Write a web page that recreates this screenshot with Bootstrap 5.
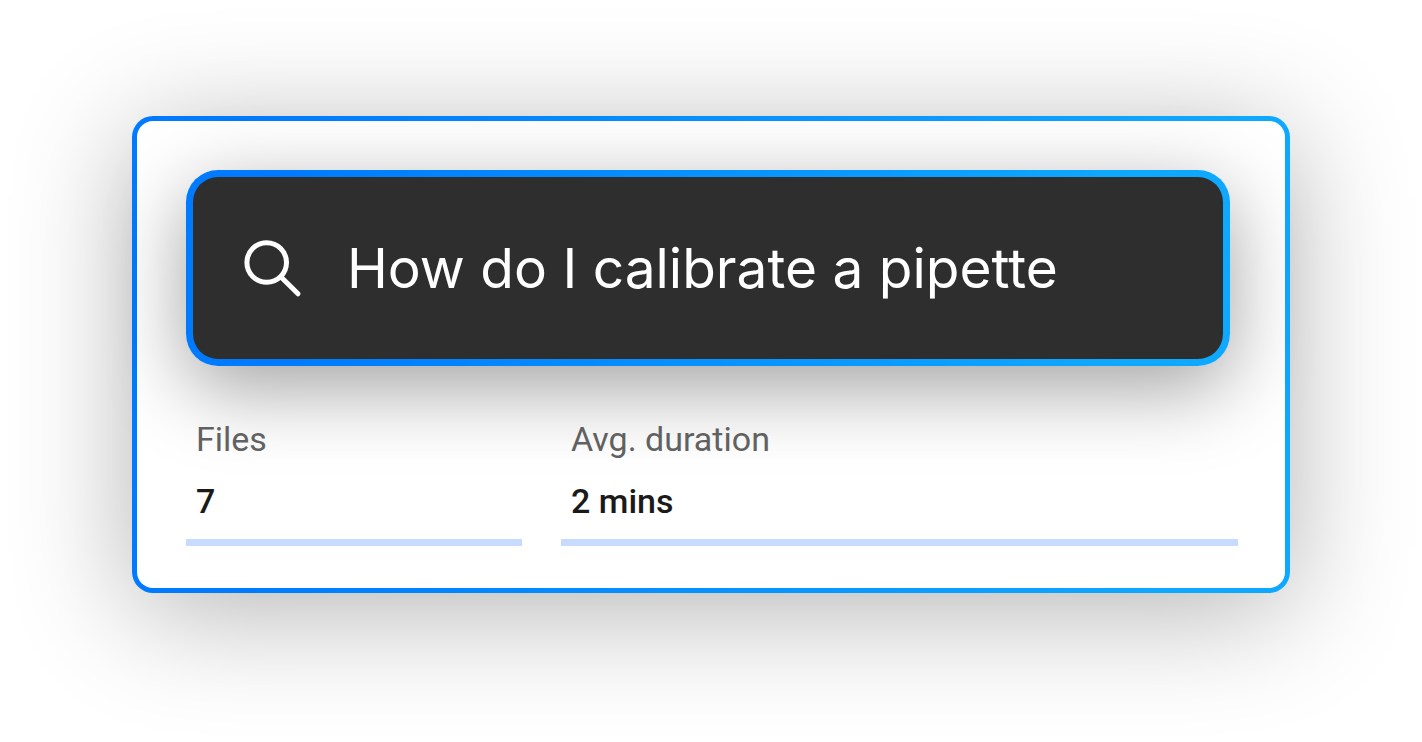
<!DOCTYPE html>
<html lang="en">
<head>
<meta charset="utf-8">
<meta name="viewport" content="width=device-width, initial-scale=1">
<title>Search</title>
<link href="https://cdn.jsdelivr.net/npm/bootstrap@5.3.0/dist/css/bootstrap.min.css" rel="stylesheet">
<style>
  :root { --edge: linear-gradient(90deg, #007bff 10%, #0fa8ff 90%); }
  body { background: #fff; font-family: Roboto, sans-serif; }
  .page-area { padding: 116px 132px; overflow: hidden; min-height: 100vh; }
  .panel {
    border: 5px solid transparent;
    border-radius: 21px;
    padding: 49px 47px 42px 49px;
    background: linear-gradient(#fff, #fff) padding-box, var(--edge) border-box;
    box-shadow: 0 18px 120px rgba(0, 0, 0, .3);
  }
  .search-box {
    border: 7px solid transparent;
    border-radius: 32px;
    height: 196px;
    padding: 0 48px;
    gap: 44px;
    margin-right: 8px;
    background: linear-gradient(#2e2e2e, #2e2e2e) padding-box, var(--edge) border-box;
    box-shadow: 0 22px 80px rgba(0, 0, 0, .37);
  }
  .search-box .form-control,
  .search-box .form-control:focus {
    color: #fff;
    font: 400 55px/72px Inter, sans-serif;
    min-width: 0;
  }
  .stats { display: grid; grid-template-columns: 336fr 677fr; gap: 39px; margin-top: 51px; }
  .stat { border-bottom: 7px solid #c7daff; padding: 0 10px 16px; font-size: 34px; line-height: 44px; }
  .stat dt { color: #616161; font-weight: 400; }
  .stat dd { color: #1a1a1a; font-weight: 500; margin-top: 18px; }
</style>
</head>
<body>
<main class="page-area">
  <section class="panel">
    <form class="search-box d-flex align-items-center" role="search">
      <label for="query" class="flex-shrink-0 d-flex">
        <svg width="62" height="62" viewBox="0 0 62 62" fill="none" stroke="#fff" stroke-width="5" stroke-linecap="round" role="img" aria-label="Search">
          <circle cx="25.7" cy="25.5" r="19.8"/>
          <path d="M40 40 57 56.8"/>
        </svg>
      </label>
      <input id="query" type="text" class="form-control bg-transparent border-0 shadow-none p-0" value="How do I calibrate a pipette">
    </form>
    <dl class="stats mb-0">
      <div class="stat"><dt>Files</dt><dd class="mb-0">7</dd></div>
      <div class="stat"><dt>Avg. duration</dt><dd class="mb-0">2 mins</dd></div>
    </dl>
  </section>
</main>
<script src="https://cdn.jsdelivr.net/npm/bootstrap@5.3.0/dist/js/bootstrap.bundle.min.js"></script>
</body>
</html>
